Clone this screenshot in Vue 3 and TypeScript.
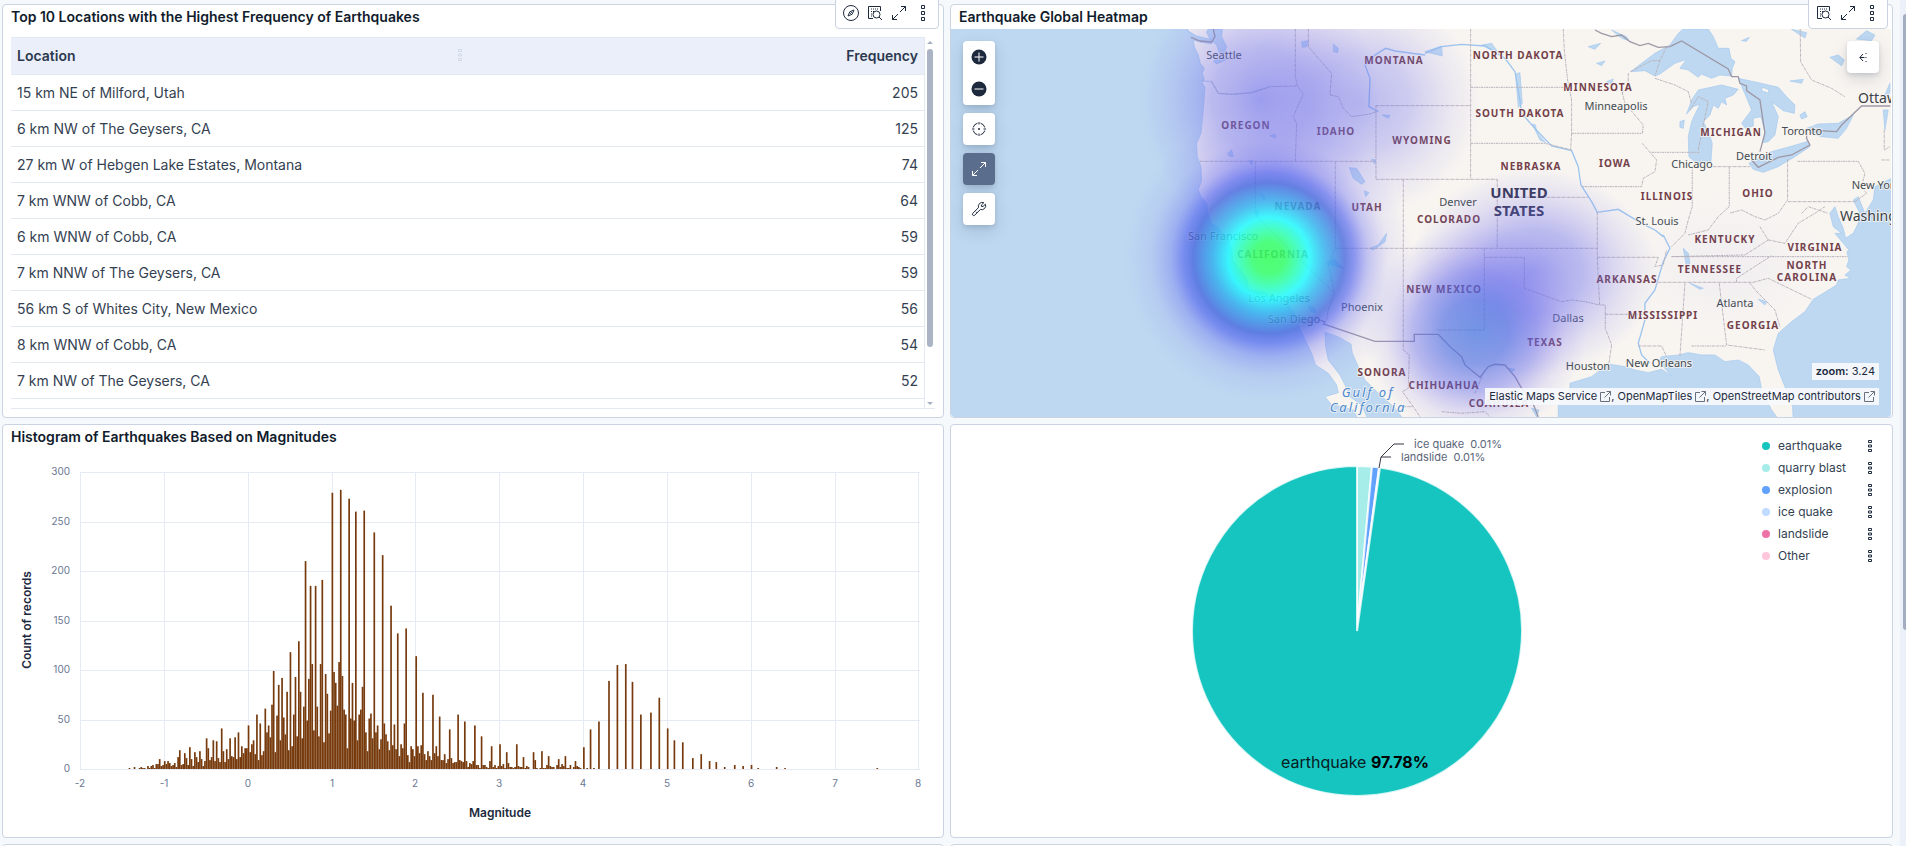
<script setup lang="ts">
interface Row { location: string; frequency: number }
interface Label { text: string; x: number; y: number }

const rows: Row[] = [
  { location: '15 km NE of Milford, Utah', frequency: 205 },
  { location: '6 km NW of The Geysers, CA', frequency: 125 },
  { location: '27 km W of Hebgen Lake Estates, Montana', frequency: 74 },
  { location: '7 km WNW of Cobb, CA', frequency: 64 },
  { location: '6 km WNW of Cobb, CA', frequency: 59 },
  { location: '7 km NNW of The Geysers, CA', frequency: 59 },
  { location: '56 km S of Whites City, New Mexico', frequency: 56 },
  { location: '8 km WNW of Cobb, CA', frequency: 54 },
  { location: '7 km NW of The Geysers, CA', frequency: 52 },
]

// Counts per magnitude bin of width 0.02, starting at bin -71 (magnitude -1.42)
const dense: number[] = [
  1, 0, 0, 2, 0, 0, 1, 2, 1, 1, 0, 3, 1, 3, 4, 1, 5, 5, 10, 3, 4, 8, 5, 8, 6, 3, 4, 6, 2, 12, 19, 4, 5, 16, 11, 4, 22, 10, 3, 17,
  12, 7, 18, 10, 3, 8, 31, 21, 9, 12, 29, 8, 28, 11, 7, 41, 18, 7, 20, 10, 31, 13, 12, 32, 10, 37, 12, 23, 16, 21, 21,
  44, 17, 25, 29, 15, 55, 9, 46, 14, 18, 61, 37, 44, 32, 65, 99, 17, 54, 85, 29, 92, 52, 35, 78, 19, 118, 23, 55, 93, 33,
  129, 78, 31, 63, 210, 49, 91, 185, 106, 39, 185, 63, 33, 106, 191, 27, 96, 76, 36, 59,
  279, 98, 87, 64, 108, 282, 94, 60, 55, 21, 273, 51, 87, 49, 260, 29, 55, 60, 83, 261, 37, 18, 51, 56, 31, 239, 37, 44, 20, 30,
  216, 46, 35, 28, 19, 165, 24, 45, 20, 137, 13, 25, 21, 46, 142, 14, 7, 23, 20, 13,
  114, 23, 16, 24, 77, 15, 9, 18, 13, 9, 75, 16, 23, 13, 53, 9, 9, 15, 6, 10, 40, 11, 6, 7, 7, 55, 9, 8, 7, 48, 8, 2, 6, 5, 8,
  44, 4, 4, 1, 33, 4, 4, 2, 1, 8, 23, 2, 4, 1, 3, 25, 3, 5, 1, 17, 6, 2, 2, 1, 2, 25, 3, 2, 2, 12, 1, 3, 2, 0, 0,
  17, 9, 1, 0, 1, 18, 1, 1, 4, 13, 3, 2, 2, 0, 4, 10, 2, 5, 3, 13, 1, 1, 4, 0, 2, 8, 3, 2, 1, 0, 22,
]
const sparse: [number, number][] = [
  [202, 1], [204, 40], [206, 1], [209, 48], [215, 89], [220, 105], [225, 106], [229, 88], [234, 55], [240, 57], [245, 72],
  [250, 41], [254, 29], [259, 27], [265, 11], [270, 15], [275, 8], [279, 7], [284, 2], [290, 4], [295, 3], [300, 4], [304, 1],
  [315, 2], [320, 1], [375, 1],
]
const plot = { left: 77, right: 917, base: 320, top: 23, unitX: 83.83, zeroX: 244.7 }
const binWidth = plot.unitX * 0.02
const perCount = (plot.base - plot.top) / 300
const bins = [...dense.map((count, i): [number, number] => [i - 71, count]), ...sparse].filter((b) => b[1] > 0)
const bars = bins.map(([bin, count]) => ({
  x: plot.zeroX + bin * binWidth,
  y: plot.base - count * perCount,
  h: count * perCount,
}))
const xTicks = [-2, -1, 0, 1, 2, 3, 4, 5, 6, 7, 8].map((v) => ({ v, x: Math.round(plot.zeroX + v * plot.unitX) }))
const yTicks = [0, 50, 100, 150, 200, 250, 300].map((v) => ({ v, y: Math.round(plot.base - v * perCount) }))

const pie = { x: 406, y: 206, r: 165 }
function slice(from: number, to: number): string {
  const p = (deg: number) => {
    const a = (deg * Math.PI) / 180
    return `${pie.x + pie.r * Math.sin(a)} ${pie.y - pie.r * Math.cos(a)}`
  }
  return `M${pie.x} ${pie.y}L${p(from)}A${pie.r} ${pie.r} 0 ${to - from > 180 ? 1 : 0} 1 ${p(to)}Z`
}
const slices = [
  { d: slice(0, 5.2), color: '#a6ede9' },
  { d: slice(5.2, 7.7), color: '#61a2ff' },
  { d: slice(7.7, 8), color: '#bfdbff' },
  { d: slice(8, 360), color: '#16c5c0' },
]
const legend = [
  { name: 'earthquake', color: '#16c5c0' },
  { name: 'quarry blast', color: '#a6ede9' },
  { name: 'explosion', color: '#61a2ff' },
  { name: 'ice quake', color: '#bfdbff' },
  { name: 'landslide', color: '#ee72a6' },
  { name: 'Other', color: '#ffc7db' },
]

const L = (text: string, x: number, y: number): Label => ({ text, x, y })
const states: Label[] = [
  L('MONTANA', 449, 64), L('OREGON', 301, 129), L('IDAHO', 391, 135), L('WYOMING', 477, 144), L('NEVADA', 353, 210),
  L('UTAH', 422, 211), L('CALIFORNIA', 328, 258), L('COLORADO', 504, 223), L('NEW MEXICO', 499, 293), L('SONORA', 437, 376),
  L('CHIHUAHUA', 499, 389), L('COAHUILA', 554, 407), L('NORTH DAKOTA', 573, 59), L('SOUTH DAKOTA', 575, 117),
  L('MINNESOTA', 653, 91), L('NEBRASKA', 586, 170), L('IOWA', 670, 167), L('ILLINOIS', 722, 200), L('MICHIGAN', 786, 136),
  L('OHIO', 813, 197), L('KENTUCKY', 780, 243), L('VIRGINIA', 870, 251), L('TENNESSEE', 765, 273), L('ARKANSAS', 682, 283),
  L('MISSISSIPPI', 718, 319), L('GEORGIA', 808, 329), L('NORTH', 862, 269), L('CAROLINA', 862, 281), L('TEXAS', 600, 346),
]
const cities: Label[] = [
  L('Seattle', 279, 59), L('Minneapolis', 671, 110), L('Chicago', 747, 168), L('Detroit', 809, 160), L('Toronto', 857, 135),
  L('Denver', 513, 206), L('St. Louis', 712, 225), L('Atlanta', 790, 307), L('Dallas', 623, 322), L('Houston', 643, 370),
  L('New Orleans', 714, 367), L('Phoenix', 417, 311), L('San Diego', 349, 323), L('Los Angeles', 334, 302),
  L('San Francisco', 278, 240), L('New York', 931, 189),
]
const capitals: Label[] = [L('Ottawa', 913, 103), L('Washington', 895, 221)]
const credits = ['Elastic Maps Service', 'OpenMapTiles', 'OpenStreetMap contributors']
</script>

<template>
  <div class="page">
    <main class="grid">
      <section class="panel">
        <h2>Top 10 Locations with the Highest Frequency of Earthquakes</h2>
        <div class="toolbar">
          <button type="button" aria-label="Explore in Discover">
            <svg width="16" height="16" viewBox="0 0 16 16" fill="none" stroke="currentColor"><circle cx="8" cy="8" r="7.5" /><path d="M11 5 9.2 9.2 5 11l1.8-4.2zM7.2 8.8l1.6-1.6" /></svg>
          </button>
          <button type="button" aria-label="Inspect">
            <svg width="16" height="16" viewBox="0 0 16 16" fill="none" stroke="currentColor"><path d="M6 13.5H1.5v-12h12V6" /><path d="M4 4h8M4 6.500h4M4 9h2M4 11h1" stroke-dasharray="1 1" /><circle cx="9.500" cy="9.500" r="3.500" /><path d="m12 12 3 3" /></svg>
          </button>
          <button type="button" aria-label="Maximize">
            <svg width="16" height="16" viewBox="0 0 16 16" fill="none" stroke="currentColor"><path d="M10 1.500h4.500V6M14.500 1.500 9 7M6 14.500H1.500V10M1.500 14.500 7 9" /></svg>
          </button>
          <button type="button" aria-label="Panel options">
            <svg width="16" height="16" viewBox="0 0 16 16" fill="none" stroke="currentColor"><path d="M6.500.5h3v3h-3zM6.500 6.500h3v3h-3zM6.500 12.500h3v3h-3z" /></svg>
          </button>
        </div>
        <div class="table-area">
          <div class="table-scroll">
            <table>
              <thead>
                <tr>
                  <th scope="col"><span class="head">Location
                    <svg class="grip" width="4" height="12" viewBox="0 0 4 12" fill="none" stroke="#d3dae7"><path d="M.5.5h3v2h-3zM.5 5h3v2h-3zM.5 9.500h3v2h-3z" /></svg></span></th>
                  <th scope="col" class="num">Frequency</th>
                </tr>
              </thead>
              <tbody>
                <tr v-for="row in rows" :key="row.location">
                  <td>{{ row.location }}</td>
                  <td class="num">{{ row.frequency }}</td>
                </tr>
              </tbody>
            </table>
          </div>
          <div class="table-bar" aria-hidden="true"><i class="up"></i><i class="thumb"></i><i class="down"></i></div>
        </div>
      </section>

      <section class="panel">
        <h2>Earthquake Global Heatmap</h2>
        <div class="toolbar">
          <button type="button" aria-label="Inspect">
            <svg width="16" height="16" viewBox="0 0 16 16" fill="none" stroke="currentColor"><path d="M6 13.5H1.5v-12h12V6" /><path d="M4 4h8M4 6.500h4M4 9h2M4 11h1" stroke-dasharray="1 1" /><circle cx="9.500" cy="9.500" r="3.500" /><path d="m12 12 3 3" /></svg>
          </button>
          <button type="button" aria-label="Maximize">
            <svg width="16" height="16" viewBox="0 0 16 16" fill="none" stroke="currentColor"><path d="M10 1.500h4.500V6M14.500 1.500 9 7M6 14.500H1.500V10M1.500 14.500 7 9" /></svg>
          </button>
          <button type="button" aria-label="Panel options">
            <svg width="16" height="16" viewBox="0 0 16 16" fill="none" stroke="currentColor"><path d="M6.500.5h3v3h-3zM6.500 6.500h3v3h-3zM6.500 12.500h3v3h-3z" /></svg>
          </button>
        </div>
        <div class="map">
          <svg class="map-canvas" viewBox="6 29 940 388" preserveAspectRatio="xMidYMid slice" role="img" aria-label="Earthquake heatmap of the United States">
            <defs>
              <radialGradient id="heat-hot">
                <stop offset="0" stop-color="#34ff5c" stop-opacity=".86" />
                <stop offset=".11" stop-color="#34ff6c" stop-opacity=".86" />
                <stop offset=".19" stop-color="#2effae" stop-opacity=".86" />
                <stop offset=".28" stop-color="#22faff" stop-opacity=".86" />
                <stop offset=".39" stop-color="#30aeee" stop-opacity=".82" />
                <stop offset=".52" stop-color="#4668de" stop-opacity=".8" />
                <stop offset=".59" stop-color="#5062ee" stop-opacity=".64" />
                <stop offset=".68" stop-color="#6268f0" stop-opacity=".36" />
                <stop offset=".82" stop-color="#7878f0" stop-opacity=".12" />
                <stop offset="1" stop-color="#8080f0" stop-opacity="0" />
              </radialGradient>
              <radialGradient id="heat-warm">
                <stop offset="0" stop-color="#4878e0" stop-opacity=".72" />
                <stop offset=".3" stop-color="#4c6ce2" stop-opacity=".64" />
                <stop offset=".55" stop-color="#5c62ea" stop-opacity=".42" />
                <stop offset=".8" stop-color="#7a70ee" stop-opacity=".13" />
                <stop offset="1" stop-color="#8080f0" stop-opacity="0" />
              </radialGradient>
              <radialGradient id="heat-mild">
                <stop offset="0" stop-color="#6468ec" stop-opacity=".6" />
                <stop offset=".4" stop-color="#6a6cec" stop-opacity=".43" />
                <stop offset=".75" stop-color="#7a74ee" stop-opacity=".15" />
                <stop offset="1" stop-color="#8080f0" stop-opacity="0" />
              </radialGradient>
            </defs>
            <rect x="6" y="29" width="940" height="388" fill="#f8f5f1" />
            <g transform="scale(.3333)">
              <!-- oceans, gulfs and great lakes -->
              <g class="water">
                <path d="M0 80H728V92L735 100 760 125 745 120 748 140 760 165 766 190 778 205 772 220 778 240 770 245 780 262 775 330 768 400 755 430 757 470 768 500 770 540 760 570 768 590 785 610 788 640 800 670 820 685 835 705 850 720 862 755 862 780 890 815 905 835 912 868 960 878 980 892 1030 915 1048 940 1060 975 1078 1015 1100 1060 1112 1095 1150 1120 1175 1155 1180 1178 1140 1190 1160 1215 1190 1220 1225 1230 1240 1260H0Z" />
                <path d="M1140 997 1165 1005 1185 1013 1205 1025 1218 1032 1222 1060 1240 1100 1260 1140 1300 1180 1345 1220 1378 1260H1270L1250 1215 1215 1190 1205 1165 1185 1125 1150 1080 1142 1040Z" />
                <path d="M832 87 830 110 845 140 835 165 842 180 815 192 806 184 825 165 815 135 795 118 785 97 790 87ZM728 92 755 108 795 118 812 105 800 132 765 126Z" />
                <path d="M1840 1260 1840 1215 1875 1170 1875 1150 1940 1130 1990 1092 2040 1100 2070 1110 2110 1118 2150 1108 2180 1127 2155 1100 2140 1085 2150 1070 2200 1065 2230 1058 2270 1065 2310 1065 2340 1085 2380 1080 2410 1095 2443 1130 2450 1170 2480 1230 2502 1260ZM2545 1260 2543 1220 2520 1160 2500 1110 2485 1050 2500 1000 2540 965 2580 935 2605 898 2635 880 2675 855 2680 840 2718 835 2700 825 2718 810 2705 800 2712 780 2706 755 2712 750 2695 730 2670 700 2690 700 2665 680 2655 640 2670 620 2680 650 2695 685 2702 715 2725 700 2740 670 2745 640 2725 600 2740 590 2760 640 2785 600 2790 560 2840 535V1260Z" />
              </g>
              <g class="water" transform="translate(1440 0)">
                <path d="M617 215 650 190 690 160 735 135 760 100 775 87H850L865 110 880 145 912 145 918 175 930 185 922 205 920 228 885 225 860 235 830 222 820 232 790 210 765 205 785 178 750 190 705 222 690 228 660 212Z" />
                <path d="M820 270 890 255 940 268 925 285 900 295 905 315 890 305 880 325 865 315 855 345 835 365 848 390 862 430 858 485 815 490 792 470 790 410 800 365 825 312 805 320 785 342 800 300Z" />
                <path d="M940 235 1000 248 1060 262 1085 290 1110 315 1108 340 1075 332 1040 305 1060 350 1050 405 1030 425 1012 428 1020 395 1008 350 985 355 985 378 962 385 950 370 965 350 980 330 968 300 955 270Z" />
                <path d="M972 490 1005 475 1040 455 1095 440 1150 424 1155 440 1110 470 1060 500 1015 517 985 508ZM1145 385 1180 372 1240 370 1285 345 1265 385 1240 415 1190 410 1160 400ZM1125 345 1140 335 1147 350 1130 357Z" />
                <path d="M490 140 527 130 510 148ZM515 190 540 183 530 197ZM545 245 565 237 560 252ZM765 365 778 360 775 385 765 382ZM1095 243 1135 238 1130 250ZM950 122 973 112 965 124ZM1215 172 1240 165 1258 180 1250 197ZM1295 117 1325 92 1350 105 1340 122ZM1378 290 1395 250 1395 275 1380 310ZM1375 330H1390L1380 390ZM560 90 605 110 612 122 590 115ZM1100 88 1145 98 1140 114ZM0 155 50 138 52 168ZM170 135 200 130 218 155 190 145ZM272 222 285 218 292 310 280 322ZM322 372 332 375 335 395 362 428 345 420Z" />
                <path d="M775 745 790 760 795 790 785 800ZM795 850 835 865 825 868ZM1000 898 1025 905 1020 915ZM250 1105 270 1108 262 1115ZM320 1225 342 1230 335 1251Z" />
                <path class="island" d="M1012 262 1030 268 1032 280 1010 272Z" />
              </g>
              <path class="water" d="M1070 125 1090 122 1085 140 1072 142ZM1165 132 1180 145 1178 158 1165 155ZM975 408 990 402 993 414ZM848 460 860 450 865 470 852 468ZM912 482H924L920 495ZM1213 503 1235 505 1260 545 1250 553 1225 535ZM1258 572 1272 578 1262 590ZM1280 478 1292 480 1290 492ZM1312 345 1335 346 1330 355ZM945 580 960 590 958 600ZM928 635 940 632 938 648ZM1145 792 1165 775 1195 805 1165 797ZM1275 745 1300 735 1325 700 1320 725 1285 750ZM1090 918 1110 925 1112 938 1098 935Z" />
              <!-- rivers -->
              <g class="river">
                <path d="M1300 335 1272 320 1275 235 1260 195 1290 165 1322 145 1350 153 1440 165" />
                <path d="M770 243 800 245 820 280 860 283 920 278 975 260" stroke-opacity=".5" />
                <g transform="translate(1440 0)"><path d="M0 160 50 140 110 133 180 138 240 175 270 215 285 300 290 340 325 380 380 438 440 452 460 500 468 555 500 605 517 637 580 628 600 640M715 705 735 745 715 785 690 870 660 910 660 960 640 1030 650 1065 675 1090M600 640 650 670 690 690 715 710" /></g>
              </g>
              <!-- state borders -->
              <g class="border">
                <path d="M800 245 820 280 860 283 920 278 975 260 1057 258M1051 87V230L1057 258 1075 282 1045 350 1055 370 1051 484M765 484H1293M931 484V645L1168 880 1150 930 1145 960M1171 484V745L1150 790 1168 880M1090 87V140L1120 175 1160 220 1155 285 1180 290 1195 325 1220 350 1275 342 1293 335M1293 317V538M1293 317H1576M1293 538H1657M1171 745H1958M1375 538V1050L1393 1065 1390 1165 1372 1175 1405 1220 1425 1250M1577 87V538M1657 538V745M1375 1220 1405 1220" />
                <g transform="translate(1440 0)">
                  <path d="M137 262H425M137 430H360L440 450M415 87 418 150 428 240 440 300V400H652M440 400 437 450M652 400 655 375 600 310 590 270M652 430 695 480 690 515 655 535 650 560H470M217 592H490M517 637V772H700L690 800 715 795 725 750M610 220V262L590 280M690 235 750 255 790 275 800 310M680 457H825M802 500V620L790 660 780 700 740 740M913 500V620L880 650 850 690 790 705M820 500H975M1088 478V600 L1060 640 1020 660 990 650 950 630 913 640M1118 484H1300L1320 520 1310 560 1325 580 1290 605H1088M1378 390V450L1395 440M1370 480H1395M1126 87 1127 185 1160 240 1220 265 1260 290M820 450 830 400 850 305 820 290 795 330M617 215 680 182 705 182 725 140M705 182 690 228" />
                  <path d="M740 770H1268M700 847H985L1030 835 1160 898M935 847V835L1040 767M517 772 524 915 541 915V985L560 1035 552 1090M541 943H660M178 745V990H32M178 772H298V865L340 880 380 895 410 905 440 900 480 905 524 915M780 850 765 1070M883 850 905 1035 1020 1050M800 1038H905M640 1038H710L725 1070M975 850 1000 880 1050 930 1065 980M1005 680 1030 720 960 765 740 770M1030 720 1080 730 1120 670 1170 640 1200 620M1130 640 1150 620 1210 640M150 1180 175 1120M50 1235 110 1240 180 1235 195 1250" />
                </g>
              </g>
              <!-- country borders -->
              <g class="country">
                <path d="M738 112 765 123 800 126 810 110 805 87M1120 960 1140 965 1135 972 1290 1024H1408V1003H1480L1515 1040 1550 1070 1560 1095 1605 1132 1630 1100 1650 1093 1680 1095 1710 1130 1730 1165 1760 1200 1780 1251" />
                <path transform="translate(1440 0)" d="M510 90 530 100 560 110 590 105 615 125 645 137 670 130 700 142 735 140 770 123 910 207 920 230 940 230 945 250 965 258 965 272 1005 300 1020 400 1005 455M980 480 1000 502 1060 472 1100 465 1155 435 1145 415V390L1235 395 1250 375 1310 318 1396 318" />
              </g>
            </g>
            <g class="state"><text v-for="l in states" :key="l.text" :x="l.x" :y="l.y">{{ l.text }}</text></g>
            <g class="city"><text v-for="l in cities" :key="l.text" :x="l.x" :y="l.y">{{ l.text }}</text></g>
            <g class="capital"><text v-for="l in capitals" :key="l.text" :x="l.x" :y="l.y">{{ l.text }}</text></g>
            <g class="nation"><text x="574" y="198">UNITED</text><text x="574" y="216">STATES</text></g>
            <g class="sea"><text x="423" y="397">Gulf of</text><text x="423" y="412">California</text></g>
            <!-- heat density -->
            <ellipse cx="315" cy="100" rx="120" ry="130" fill="url(#heat-mild)" />
            <ellipse cx="415" cy="103" rx="122" ry="115" fill="url(#heat-mild)" opacity=".7" />
            <ellipse cx="588" cy="272" rx="125" ry="105" fill="url(#heat-mild)" />
            <ellipse cx="530" cy="332" rx="112" ry="108" fill="url(#heat-warm)" />
            <ellipse cx="780" cy="265" rx="110" ry="75" fill="url(#heat-mild)" opacity=".08" />
            <circle cx="324" cy="258" r="145" fill="url(#heat-hot)" />
          </svg>

          <div class="map-controls">
            <div class="zoom-group">
              <button type="button" aria-label="Zoom in"><svg width="16" height="16" viewBox="0 0 16 16"><circle cx="8" cy="8" r="7.500" fill="#1d2a3e" /><path d="M3.500 8h9M8 3.500v9" stroke="#fff" /></svg></button>
              <button type="button" aria-label="Zoom out"><svg width="16" height="16" viewBox="0 0 16 16"><circle cx="8" cy="8" r="7.500" fill="#1d2a3e" /><path d="M3.500 8h9" stroke="#fff" /></svg></button>
            </div>
            <button type="button" aria-label="Fit to data bounds"><svg width="16" height="16" viewBox="0 0 16 16" fill="none" stroke="currentColor"><path d="M9.500 2.200a6 6 0 0 1 4.300 4.300M13.800 9.500a6 6 0 0 1-4.300 4.300M6.500 13.800a6 6 0 0 1-4.300-4.300M2.200 6.500a6 6 0 0 1 4.300-4.300M8 1v2.500M8 12.500V15M1 8h2.500M12.500 8H15" /><circle cx="8" cy="8" r="1" fill="currentColor" stroke="none" /></svg></button>
            <button type="button" class="active" aria-label="Exit full screen"><svg width="16" height="16" viewBox="0 0 16 16" fill="none" stroke="currentColor"><path d="M10 1.500h4.500V6M14.500 1.500 9 7M6 14.500H1.500V10M1.500 14.500 7 9" /></svg></button>
            <button type="button" aria-label="Tools"><svg width="16" height="16" viewBox="0 0 16 16" fill="none" stroke="currentColor"><path d="M12.800 1.700a4 4 0 0 0-5.300 5L1.800 12.300a1.300 1.300 0 0 0 1.900 1.900l5.700-5.700a4 4 0 0 0 5-5.300L12 5.500 10.500 5.400 10.400 4z" /><path d="m5 10.800 1 1" /></svg></button>
          </div>
          <button type="button" class="layers" aria-label="Expand layers panel"><svg width="8" height="9" viewBox="0 0 8 9" fill="none" stroke="currentColor"><path d="M5.500 4.500H1M4 1 .8 4.500 4 8M7 0v1M7 4v1M7 8v1" /></svg></button>
          <div class="map-foot">
            <div class="tag"><b>zoom:</b> 3.24</div>
            <div class="tag credits">
              <template v-for="(c, i) in credits" :key="c"><a href="#">{{ c }} <svg width="11" height="11" viewBox="0 0 11 11" fill="none" stroke="#69707d"><path d="M5 1.500H.5v9h9V6M6.500.5h4v4M10.500.5 4.500 6.500" /></svg></a><template v-if="i < 2">, </template></template>
            </div>
          </div>
        </div>
      </section>

      <section class="panel">
        <h2>Histogram of Earthquakes Based on Magnitudes</h2>
        <svg class="histogram" viewBox="0 0 940 388" role="img" aria-label="Count of records by magnitude">
          <g class="gridline">
            <path v-for="t in yTicks" :key="'y' + t.v" :d="`M${plot.left} ${t.y}H${plot.right}`" />
            <path v-for="t in xTicks" :key="'x' + t.v" :d="`M${t.x} ${plot.top}V${plot.base}`" />
          </g>
          <rect v-for="b in bars" :key="b.x" class="bar" :x="b.x" :y="b.y" :width="binWidth" :height="b.h" />
          <g class="tick end"><text v-for="t in yTicks" :key="t.v" x="67" :y="t.y + 3">{{ t.v }}</text></g>
          <g class="tick"><text v-for="t in xTicks" :key="t.v" :x="t.x" y="338">{{ t.v }}</text></g>
          <text class="axis" x="497" y="368">Magnitude</text>
          <text class="axis" transform="translate(28 171) rotate(-90)">Count of records</text>
        </svg>
      </section>

      <section class="panel pie-panel">
        <svg class="pie" viewBox="0 0 811 412" role="img" aria-label="Earthquake types">
          <path v-for="s in slices" :key="s.d" :d="s.d" :fill="s.color" stroke="#fff" stroke-opacity=".8" stroke-width="2" />
          <path d="M428 43 430 32H440M430 32 443 19H453" fill="none" stroke="#343741" />
          <text class="callout" x="463" y="23">ice quake&#160; 0.01%</text>
          <text class="callout" x="450" y="36">landslide&#160; 0.01%</text>
          <text class="main-label" x="404" y="343">earthquake <tspan>97.78%</tspan></text>
        </svg>
        <ul class="legend">
          <li v-for="item in legend" :key="item.name">
            <i :style="{ background: item.color }"></i><span>{{ item.name }}</span>
            <button type="button" :aria-label="item.name + ' options'"><svg width="4" height="12" viewBox="0 0 4 12" fill="none" stroke="currentColor"><path d="M.5.5h3v2h-3zM.5 5h3v2h-3zM.5 9.500h3v2h-3z" /></svg></button>
          </li>
        </ul>
      </section>

      <section class="panel"></section>
      <section class="panel"></section>
    </main>
    <div class="page-bar" aria-hidden="true"><i></i></div>
  </div>
</template>

<style>
body { margin: 0; overflow: hidden; background: #f6f9fc; }
</style>

<style scoped>
.page { display: flex; height: 100vh; overflow: hidden; font-family: Inter, "Liberation Sans", sans-serif; font-size: 14px; color: #1d2a3e; }
.page * { box-sizing: border-box; }
.grid { flex: 1; display: grid; grid-template-columns: 942fr 943fr; grid-auto-rows: 414px; gap: 6px; padding: 4px 7px 0 2px; }
.panel { position: relative; display: flex; flex-direction: column; min-width: 0; background: #fff; border: 1px solid #cad3e2; border-radius: 4px; }
h2 { margin: 0; padding: 0 8px; font-size: 14px; line-height: 24px; font-weight: 600; color: #111c2c; }
button { display: flex; align-items: center; justify-content: center; padding: 0; border: 0; background: #fff; color: #1d2a3e; font: inherit; }
.toolbar { position: absolute; z-index: 2; top: -8px; right: 4px; display: flex; padding: 3px; background: #fff; border: 1px solid #cad3e2; border-radius: 4px; }
.toolbar button { width: 24px; height: 24px; }

.table-area { flex: 1; display: flex; min-height: 0; margin: 8px; border-bottom: 1px solid #e3e8f2; }
.table-scroll { flex: 1; overflow: hidden; border-right: 1px solid #e3e8f2; }
table { width: 100%; border-collapse: separate; border-spacing: 0; color: #343f52; }
th { height: 38px; padding: 0 6px 2px; background: #ebeff9; border-top: 1px solid #e3e8f2; border-bottom: 1px solid #e3e8f2; font-weight: 600; text-align: left; color: #2b394f; }
td { height: 36px; padding: 0 6px; border-bottom: 1px solid #e3e8f2; }
th:first-child { width: 50%; }
.head { display: flex; align-items: center; justify-content: space-between; }
.num { text-align: right; }
.table-bar { width: 10px; display: flex; flex-direction: column; align-items: center; padding: 4px 0 3px; }
.table-bar i { display: block; }
.up, .down { border: 3px solid transparent; }
.up { border-top: 0; border-bottom-color: #a6b0c2; }
.down { border-bottom: 0; border-top-color: #a6b0c2; }
.thumb { width: 6px; flex: 0 0 298px; margin: 5px 0 auto; border-radius: 3px; background: #abb4c4; }

.map { position: relative; flex: 1; min-height: 0; overflow: hidden; border-radius: 0 0 4px 4px; margin-right: 1px; }
.map-canvas { display: block; width: 100%; height: 100%; }
.water path, path.water { fill: #bed8f1; stroke: #a3c8ee; stroke-width: 2; }
.water .island { fill: #f8f5f1; }
.river { fill: none; stroke: #9cc4ee; stroke-width: 4; }
.border { fill: none; stroke: #bab3ba; stroke-width: 3; stroke-dasharray: 8 2 3 2; }
.country { fill: none; stroke: #9d98a6; stroke-width: 4; }
.map text { font-family: "Noto Sans", sans-serif; text-anchor: middle; paint-order: stroke; stroke: #f8f5f1; stroke-opacity: .8; stroke-width: 2px; stroke-linejoin: round; }
.map .state text { font-size: 10px; font-weight: 700; letter-spacing: 1px; fill: #734049; }
.map .city text { font-size: 11px; fill: #444c52; }
.map .capital text { font-size: 14px; text-anchor: start; fill: #3b4248; }
.map .nation text { font-size: 15px; font-weight: 700; fill: #33334f; }
.map .sea text { font-size: 13px; font-style: italic; letter-spacing: 2px; fill: #4c8bd0; }
.map-controls { position: absolute; top: 12px; left: 12px; display: flex; flex-direction: column; gap: 8px; }
.map-controls button, .layers { width: 32px; height: 32px; }
.map-controls > *, .layers { border-radius: 4px; overflow: hidden; box-shadow: 0 2px 4px rgba(43, 57, 79, .14), 0 6px 16px rgba(43, 57, 79, .16); }
.map-controls .active { background: #5a6d8c; color: #fff; }
.layers { position: absolute; top: 12px; right: 12px; }
.map-foot { position: absolute; right: 12px; bottom: 12px; display: flex; flex-direction: column; align-items: flex-end; gap: 8px; }
.tag { padding: 0 4px; background: #f6f9fcee; font-size: 11px; line-height: 17px; }
.tag b { font-weight: 600; }
.tag a { color: #1d2a3e; text-decoration: none; }
.tag a svg { vertical-align: -2px; }

.histogram { flex: 1; display: block; width: 100%; min-height: 0; }
.gridline { stroke: #e6eaf4; stroke-width: 1; shape-rendering: crispEdges; }
.bar { fill: #763a0c; }
.tick text { font-size: 10px; fill: #6a7893; text-anchor: middle; }
.tick.end text { text-anchor: end; }
.axis { font-size: 12px; font-weight: 600; fill: #1d2a3e; text-anchor: middle; }

.pie-panel { flex-direction: row; }
.pie { flex: 1; min-width: 0; height: 100%; }
.callout { font-size: 11px; fill: #5a6577; }
.main-label { font-size: 16px; fill: #07201f; text-anchor: middle; }
.main-label tspan { font-weight: 700; fill: #000; }
.legend { flex: none; width: 130px; margin: 0; padding: 10px 20px 0 0; list-style: none; font-size: 12px; line-height: 22px; color: #343f52; }
.legend li { display: flex; align-items: center; height: 22px; }
.legend i { width: 8px; height: 8px; margin-right: 8px; border-radius: 50%; }
.legend span { flex: 1; white-space: nowrap; }

.page-bar { width: 6px; padding: 14px 0 0 3px; background: #ecf0f9; }
.page-bar i { display: block; height: 616px; background: #a2adc2; border-radius: 3px 0 0 3px; }
</style>
